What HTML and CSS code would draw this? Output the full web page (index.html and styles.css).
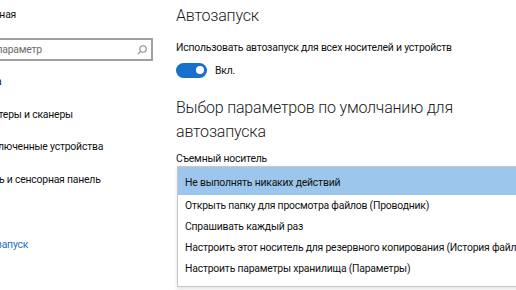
FILE: index.html
```html
<!DOCTYPE html>
<html lang="ru">
<head>
    <meta charset="UTF-8">
    <title>Параметры — Автозапуск</title>
    <link rel="stylesheet" href="styles.css">
</head>
<body>
    <div class="window">
        <nav class="sidebar">
            <div class="sidebar-inner">
                <div class="home">Главная</div>
                <div class="search">
                    <span class="search-text">Найти параметр</span>
                    <svg class="search-icon" width="10" height="10" viewBox="0 0 10 10">
                        <circle cx="6" cy="4" r="3.2" fill="none" stroke="#8a8a8a" stroke-width="1.1"/>
                        <path d="M3.7 6.3 L0.8 9.2" stroke="#8a8a8a" stroke-width="1.2"/>
                    </svg>
                </div>
                <ul class="nav-list">
                    <li class="group">Устройства</li>
                    <li>Принтеры и сканеры</li>
                    <li>Подключенные устройства</li>
                    <li>Мышь и сенсорная панель</li>
                    <li>Ввод</li>
                    <li class="active">Автозапуск</li>
                </ul>
            </div>
        </nav>

        <main class="content">
            <h2 class="title">Автозапуск</h2>
            <p class="desc">Использовать автозапуск для всех носителей и устройств</p>
            <div class="toggle-row">
                <span class="toggle"><span class="knob"></span></span>
                <span class="toggle-label">Вкл.</span>
            </div>

            <h2 class="title title-two">Выбор параметров по умолчанию для автозапуска</h2>
            <p class="label">Съемный носитель</p>
            <ul class="dropdown">
                <li class="selected">Не выполнять никаких действий</li>
                <li>Открыть папку для просмотра файлов (Проводник)</li>
                <li>Спрашивать каждый раз</li>
                <li>Настроить этот носитель для резервного копирования (История файлов)</li>
                <li>Настроить параметры хранилища (Параметры)</li>
            </ul>
        </main>
    </div>
</body>
</html>
```

FILE: styles.css
```css
body {
    margin: 0;
    background: #fff;
    color: #111;
    font-family: Roboto, "Noto Sans", sans-serif;
    font-size: 10.4px;
    letter-spacing: -0.2px;
    overflow: hidden;
}

.window {
    display: flex;
    width: 516px;
    height: 290px;
}

.sidebar {
    width: 176px;
    flex-shrink: 0;
    overflow: hidden;
}

.sidebar-inner {
    margin-left: -38px;
}

.home {
    height: 29px;
    line-height: 29px;
    padding-left: 16px;
}

.search {
    display: flex;
    align-items: center;
    justify-content: space-between;
    box-sizing: border-box;
    width: 191px;
    height: 23px;
    margin-top: 9px;
    padding: 0 4px 0 1px;
    border: 2px solid #a0a0a0;
    color: #6b6b6b;
}

.nav-list {
    list-style: none;
    margin: 5px 0 0;
    padding: 0;
}

.nav-list li {
    height: 32.5px;
    line-height: 32.5px;
    padding-left: 12px;
    white-space: nowrap;
}

.nav-list li.group {
    margin-left: -27px;
}

.nav-list li.active {
    color: #1d6fc4;
}

.content {
    flex: 1;
    min-width: 0;
    padding-top: 4px;
}

.title {
    margin: 0;
    font-size: 16px;
    font-weight: 300;
    line-height: 24px;
    color: #1a1a1a;
}

.desc {
    margin: 12px 0 0;
    line-height: 16px;
}

.toggle-row {
    display: flex;
    align-items: center;
    gap: 8px;
    margin-top: 6px;
    height: 16px;
}

.toggle {
    display: flex;
    align-items: center;
    justify-content: flex-end;
    box-sizing: border-box;
    width: 31px;
    height: 15px;
    padding-right: 3px;
    border-radius: 8px;
    background: #1670cc;
}

.knob {
    width: 8px;
    height: 8px;
    border-radius: 50%;
    background: #fff;
}

.title-two {
    width: 300px;
    margin-top: 18px;
}

.label {
    margin: 8px 0 0;
    line-height: 14px;
}

.dropdown {
    list-style: none;
    margin: 0 -20px 0 1px;
    padding: 0 0 7px;
    border: 1px solid #c8c8c8;
    box-shadow: 0 2px 4px rgba(0, 0, 0, 0.12);
}

.dropdown li {
    height: 21px;
    line-height: 21px;
    padding-left: 7px;
    white-space: nowrap;
    overflow: hidden;
}

.dropdown li.selected {
    height: 28px;
    line-height: 32px;
    background: #9cc6ec;
}
```
